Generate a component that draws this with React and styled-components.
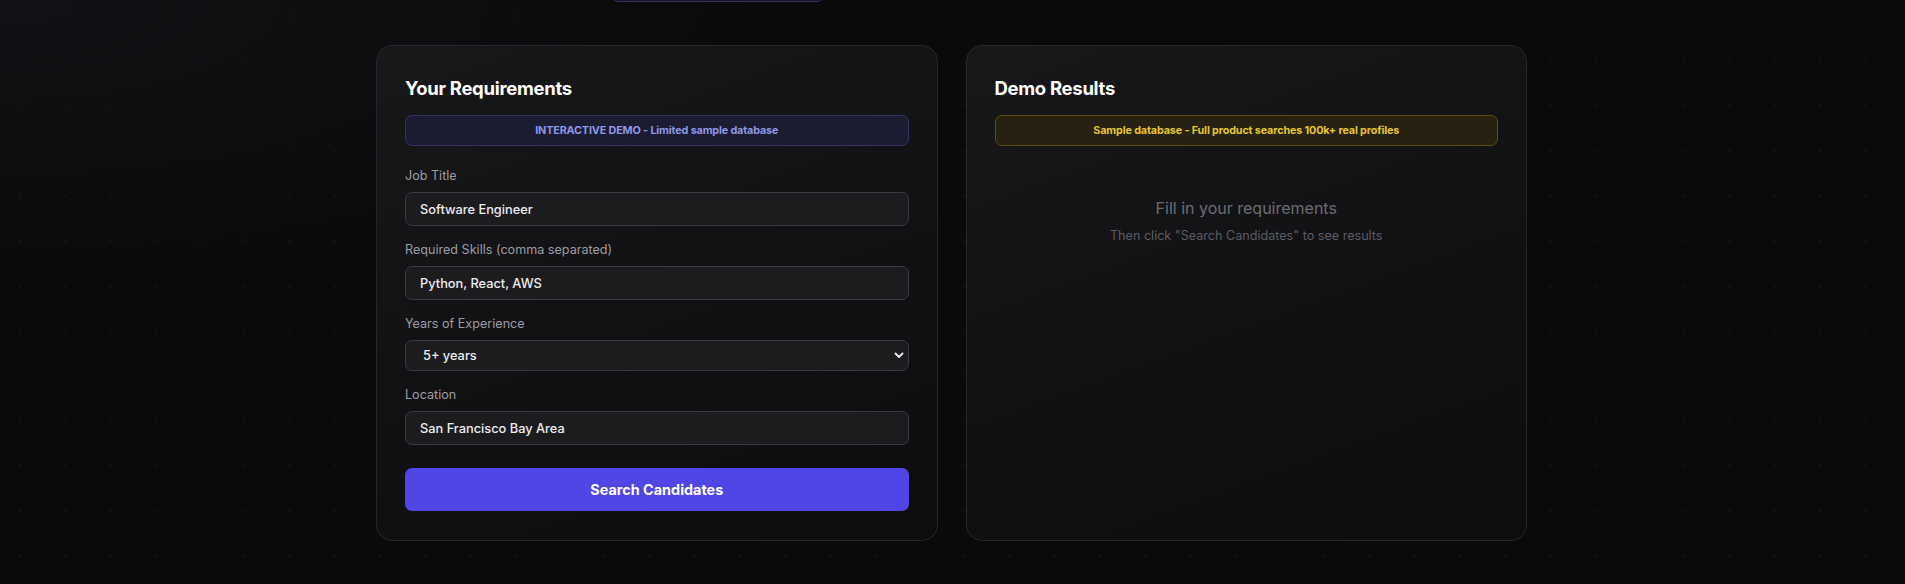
import React from "react";
import styled, { createGlobalStyle } from "styled-components";

const Global = createGlobalStyle`
  * { box-sizing: border-box; }
  html, body { margin: 0; padding: 0; }
  body {
    background-color: #0a0a0b;
    background-image:
      radial-gradient(circle, #151518 1px, transparent 1.2px),
      radial-gradient(ellipse 60% 70% at 0% 0%, rgba(24, 24, 30, 0.55), transparent 70%);
    background-size: 45px 45px, 100% 100%;
    background-position: -2.5px -6.5px, 0 0;
    font-family: Inter, "Noto Sans", sans-serif;
    color: #fafafa;
    min-height: 584px;
    overflow: hidden;
  }
`;

const Page = styled.div`
  max-width: 1153px;
  margin: 0 auto;
  padding-right: 2px;
`;

const TopPill = styled.div`
  width: 211px;
  height: 36px;
  margin: -34px 0 0 236px;
  border: 1px solid #34346a;
  border-radius: 6px;
  background: #121222;
`;

const Grid = styled.div`
  display: grid;
  grid-template-columns: 1fr 1fr;
  gap: 28px;
  margin-top: 43px;
`;

const Card = styled.section`
  display: flex;
  flex-direction: column;
  padding: 28px 28px 29px;
  border: 1px solid #27272b;
  border-radius: 16px;
  background: linear-gradient(160deg, #18181b 0%, #111113 55%, #0d0d0f 100%);
`;

const Title = styled.h2`
  margin: 0 0 13px;
  font-size: 18.5px;
  line-height: 28px;
  font-weight: 700;
  color: #ffffff;
  letter-spacing: -0.3px;
`;

const Banner = styled.div`
  padding: 6px 12px;
  border-radius: 7px;
  border: 1px solid ${(p) => (p.$tone === "yellow" ? "#5e4c12" : "#33336a")};
  background: ${(p) => (p.$tone === "yellow" ? "#262110" : "#1b1b31")};
  color: ${(p) => (p.$tone === "yellow" ? "#e6c531" : "#8e97e4")};
  font-size: 10.8px;
  line-height: 17px;
  font-weight: 700;
  letter-spacing: -0.15px;
  text-align: center;
`;

const Form = styled.form`
  display: flex;
  flex-direction: column;
  gap: 14px;
  margin-top: 20px;
`;

const Field = styled.div`
  display: flex;
  flex-direction: column;
  gap: 6px;
`;

const Label = styled.label`
  font-size: 12.6px;
  line-height: 20px;
  color: #9c9ca3;
`;

const Input = styled.input`
  height: 34px;
  padding: 0 14px;
  border: 1px solid #3a3a3f;
  border-radius: 7px;
  background: #1c1c1f;
  color: #ececee;
  font-family: inherit;
  font-size: 12.8px;
  font-weight: 500;
  outline: none;
`;

const SelectWrap = styled.div`
  position: relative;
  display: flex;
`;

const Select = styled.select`
  flex: 1;
  height: 31px;
  padding: 0 24px 0 17px;
  border: 1px solid #3a3a3f;
  border-radius: 7px;
  background: #1c1c1f;
  color: #ececee;
  font-family: inherit;
  font-size: 12.8px;
  font-weight: 500;
  appearance: none;
  outline: none;
`;

const Chevron = styled.svg`
  position: absolute;
  right: 5px;
  top: 12px;
  width: 10px;
  height: 7px;
  pointer-events: none;
`;

const Button = styled.button`
  margin-top: 9px;
  height: 43px;
  border: none;
  border-radius: 7px;
  background: #4f46e5;
  color: #ffffff;
  font-family: inherit;
  font-size: 14.4px;
  font-weight: 700;
  cursor: pointer;
`;

const Empty = styled.div`
  display: flex;
  flex-direction: column;
  align-items: center;
  padding-top: 50px;
`;

const EmptyTitle = styled.p`
  margin: 0;
  font-size: 16px;
  line-height: 24px;
  color: #6c6c74;
`;

const EmptyText = styled.p`
  margin: 6px 0 0;
  font-size: 12.6px;
  line-height: 20px;
  color: #5c5c64;
`;

export default function App() {
  return (
    <>
      <Global />
      <Page>
        <TopPill />
        <Grid>
          <Card>
            <Title>Your Requirements</Title>
            <Banner>INTERACTIVE DEMO - Limited sample database</Banner>
            <Form onSubmit={(e) => e.preventDefault()}>
              <Field>
                <Label>Job Title</Label>
                <Input defaultValue="Software Engineer" />
              </Field>
              <Field>
                <Label>Required Skills (comma separated)</Label>
                <Input defaultValue="Python, React, AWS" />
              </Field>
              <Field>
                <Label>Years of Experience</Label>
                <SelectWrap>
                  <Select defaultValue="5">
                    <option value="0">Any</option>
                    <option value="2">2+ years</option>
                    <option value="5">5+ years</option>
                    <option value="10">10+ years</option>
                  </Select>
                  <Chevron viewBox="0 0 10 7">
                    <path d="M1.5 1.5 L5 5 L8.5 1.5" fill="none" stroke="#e6e6e8" strokeWidth="2" strokeLinecap="round" strokeLinejoin="round" />
                  </Chevron>
                </SelectWrap>
              </Field>
              <Field>
                <Label>Location</Label>
                <Input defaultValue="San Francisco Bay Area" />
              </Field>
              <Button type="submit">Search Candidates</Button>
            </Form>
          </Card>
          <Card>
            <Title>Demo Results</Title>
            <Banner $tone="yellow">Sample database - Full product searches 100k+ real profiles</Banner>
            <Empty>
              <EmptyTitle>Fill in your requirements</EmptyTitle>
              <EmptyText>Then click "Search Candidates" to see results</EmptyText>
            </Empty>
          </Card>
        </Grid>
      </Page>
    </>
  );
}
